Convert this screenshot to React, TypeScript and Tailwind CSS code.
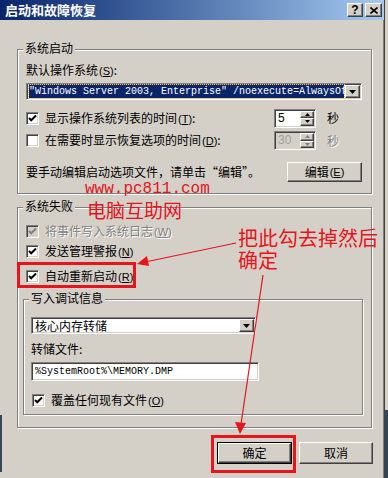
import React from "react";

const Acc = ({ k }: { k: string }) => (
  <span className="ml-[1px] font-['Liberation_Sans',sans-serif] text-[11px]">
    (<u>{k}</u>)
  </span>
);

const Check = ({
  checked,
  disabled,
  children,
}: {
  checked?: boolean;
  disabled?: boolean;
  children: React.ReactNode;
}) => {
  return (
    <div className="flex items-center h-[16px]">
      <div
        className={`w-[13px] h-[13px] border border-t-[#808080] border-l-[#808080] border-b-white border-r-white shadow-[inset_1px_1px_0_#404040,inset_-1px_-1px_0_#d4d0c8] flex items-center justify-center ${
          disabled ? "bg-[#d4d0c8]" : "bg-white"
        }`}
      >
        {checked && (
          <svg width="9" height="9" viewBox="0 0 9 9">
            <path
              d="M1 4 L3.2 6.3 L8 1.5"
              fill="none"
              stroke={disabled ? "#808080" : "#000"}
              strokeWidth="2"
            />
          </svg>
        )}
      </div>
      <span
        className={`ml-[6px] text-[12px] leading-[14px] whitespace-nowrap ${
          disabled ? "text-[#808080] [text-shadow:1px_1px_0_#fff]" : "text-black"
        }`}
      >
        {children}
      </span>
    </div>
  );
};

const Raised = ({ className, children }: { className?: string; children?: React.ReactNode }) => (
  <div
    className={`bg-[#d4d0c8] border border-t-white border-l-white border-r-[#404040] border-b-[#404040] shadow-[inset_-1px_-1px_0_#808080] flex items-center justify-center ${className}`}
  >
    {children}
  </div>
);

const Sunken = ({ className, children }: { className?: string; children?: React.ReactNode }) => (
  <div
    className={`border border-t-[#808080] border-l-[#808080] border-b-white border-r-white shadow-[inset_1px_1px_0_#404040,inset_-1px_-1px_0_#d4d0c8] ${className}`}
  >
    {children}
  </div>
);

const DownArrow = () => (
  <svg width="7" height="4" viewBox="0 0 7 4">
    <path d="M0 0 H7 L3.5 4 Z" fill="#000" />
  </svg>
);

const Spin = ({ value, disabled }: { value: string; disabled?: boolean }) => (
  <Sunken className={`flex w-[42px] h-[19px] p-[1px] ${disabled ? "bg-[#d4d0c8]" : "bg-white"}`}>
    <div
      className={`flex-1 pl-[2px] text-[12px] leading-[15px] font-['Liberation_Sans',sans-serif] ${
        disabled ? "text-[#a0a0a0]" : "text-black"
      }`}
    >
      {value}
    </div>
    <div className="flex flex-col w-[14px]">
      <Raised className="h-[8px]">
        <svg width="5" height="3" viewBox="0 0 5 3">
          <path d="M0 3 H5 L2.5 0 Z" fill={disabled ? "#808080" : "#000"} />
        </svg>
      </Raised>
      <Raised className="h-[8px]">
        <svg width="5" height="3" viewBox="0 0 5 3">
          <path d="M0 0 H5 L2.5 3 Z" fill={disabled ? "#808080" : "#000"} />
        </svg>
      </Raised>
    </div>
  </Sunken>
);

export default function App() {
  return (
    <div className="relative w-[388px] h-[478px] overflow-hidden bg-[#d4d0c8] font-['Noto_Sans_CJK_SC',sans-serif] text-black">
      <div className="w-[385px] h-[478px] border-r border-r-[#404040] shadow-[inset_-1px_0_0_#808080]">
        {/* title bar */}
        <div className="h-[20px] flex items-center bg-gradient-to-r from-[#0a246a] to-[#a6caf0] pl-[5px] pr-[2px]">
          <span className="flex-1 text-white font-bold text-[13px] leading-[16px]">启动和故障恢复</span>
          <Raised className="w-[16px] h-[14px] text-[12px] font-bold leading-none font-['Liberation_Sans',sans-serif]">
            ?
          </Raised>
          <Raised className="w-[17px] h-[14px] ml-[2px]">
            <svg width="8" height="7" viewBox="0 0 8 7">
              <path d="M0.5 0.5 L7.5 6.5 M7.5 0.5 L0.5 6.5" stroke="#000" strokeWidth="1.6" />
            </svg>
          </Raised>
        </div>

        <div className="pl-[17px] pr-[12px]">
          {/* 系统启动 */}
          <div className="relative mt-[29px] border border-[#808080] shadow-[1px_1px_0_#fff,inset_1px_1px_0_#fff] pl-[8px] pr-[9px] pb-[11px]">
            <div className="absolute -top-[9px] left-[5px] px-[2px] bg-[#d4d0c8] text-[12px] leading-[14px]">
              系统启动
            </div>
            <div className="mt-[13px] h-[14px] text-[12px] leading-[14px]">
              默认操作系统<Acc k="S" />:
            </div>
            <Sunken className="mt-[6px] h-[17px] bg-white flex items-center p-[1px]">
              <div className="flex-1 h-[13px] ml-[1px] bg-[#0a246a] outline outline-1 outline-dotted outline-[#f0c060] overflow-hidden whitespace-nowrap text-white text-[10px] leading-[13px] font-['Liberation_Mono',monospace]">
                "Windows Server 2003, Enterprise" /noexecute=AlwaysOff
              </div>
              <Raised className="w-[15px] h-[13px] ml-[1px]">
                <DownArrow />
              </Raised>
            </Sunken>
            <div className="mt-[9px] h-[18px] flex items-center">
              <div className="w-[248px]">
                <Check checked>
                  显示操作系统列表的时间<Acc k="T" />:
                </Check>
              </div>
              <Spin value="5" />
              <span className="ml-[11px] text-[12px] leading-[14px]">秒</span>
            </div>
            <div className="mt-[4px] h-[19px] flex items-center">
              <div className="w-[248px]">
                <Check>
                  在需要时显示恢复选项的时间<Acc k="D" />:
                </Check>
              </div>
              <Spin value="30" disabled />
              <span className="ml-[11px] text-[12px] leading-[14px] text-[#808080] [text-shadow:1px_1px_0_#fff]">
                秒
              </span>
            </div>
            <div className="mt-[12px] h-[20px] flex items-center justify-between">
              <span className="text-[12px] leading-[14px]">要手动编辑启动选项文件，请单击“编辑”。</span>
              <Raised className="w-[75px] h-[20px] text-[12px] leading-[14px]">
                编辑<Acc k="E" />
              </Raised>
            </div>
          </div>

          {/* 系统失败 */}
          <div className="relative mt-[13px] border border-[#808080] shadow-[1px_1px_0_#fff,inset_1px_1px_0_#fff] pl-[5px] pr-[8px] pb-[12px]">
            <div className="absolute -top-[9px] left-[5px] px-[2px] bg-[#d4d0c8] text-[12px] leading-[14px]">
              系统失败
            </div>
            <div className="pl-[3px] mt-[15px]">
              <Check checked disabled>
                将事件写入系统日志<Acc k="W" />
              </Check>
            </div>
            <div className="pl-[3px] mt-[4px]">
              <Check checked>
                发送管理警报<Acc k="N" />
              </Check>
            </div>
            <div className="pl-[3px] mt-[9px]">
              <Check checked>
                自动重新启动<Acc k="R" />
              </Check>
            </div>

            {/* 写入调试信息 */}
            <div className="relative mt-[15px] border border-[#808080] shadow-[1px_1px_0_#fff,inset_1px_1px_0_#fff] pl-[7px] pb-[6px]">
              <div className="absolute -top-[9px] left-[5px] px-[2px] bg-[#d4d0c8] text-[12px] leading-[14px]">
                写入调试信息
              </div>
              <Sunken className="mt-[17px] w-[225px] h-[17px] bg-white flex items-center p-[1px]">
                <div className="flex-1 pl-[2px] text-[12px] leading-[13px]">核心内存转储</div>
                <Raised className="w-[15px] h-[13px]">
                  <DownArrow />
                </Raised>
              </Sunken>
              <div className="mt-[8px] h-[14px] text-[12px] leading-[14px]">转储文件:</div>
              <Sunken className="mt-[6px] w-[228px] h-[19px] bg-white pl-[3px] text-[10px] leading-[17px] font-['Liberation_Mono',monospace]">
                %SystemRoot%\MEMORY.DMP
              </Sunken>
              <div className="mt-[11px] pl-[1px]">
                <Check checked>
                  覆盖任何现有文件<Acc k="O" />
                </Check>
              </div>
            </div>
          </div>

          {/* buttons */}
          <div className="mt-[14px] -mr-[1px] flex justify-end gap-[7px]">
            <div className="border border-black">
              <Raised className="w-[73px] h-[20px] text-[12px] leading-[14px]">确定</Raised>
            </div>
            <Raised className="w-[74px] h-[22px] text-[12px] leading-[14px]">取消</Raised>
          </div>
        </div>
      </div>

      {/* desktop edges */}
      <div className="absolute right-0 top-[410px] w-[3px] h-[68px] bg-[#34475a]" />
      <div className="absolute left-0 top-[415px] w-[2px] h-[57px] bg-[#34475a]" />

      {/* annotations */}
      <div className="absolute left-[85px] top-[181px] text-[16px] leading-[16px] text-[#e3141c] font-['Liberation_Mono',monospace]">
        www.pc811.com
      </div>
      <div className="absolute left-[87px] top-[199px] text-[19px] leading-[22px] text-[#e3141c]">电脑互助网</div>
      <div className="absolute left-[238px] top-[227px] text-[20px] leading-[22px] text-[#e8141b]">
        把此勾去掉然后
        <br />
        确定
      </div>
      <div className="absolute left-[17px] top-[262px] w-[119px] h-[26px] border-[3px] border-[#e8141b]" />
      <div className="absolute left-[211px] top-[435px] w-[85px] h-[38px] border-[3px] border-[#e8141b]" />
      <svg className="absolute left-0 top-0 pointer-events-none" width="388" height="478" viewBox="0 0 388 478">
        <line x1="236" y1="243" x2="145" y2="262" stroke="#e8141b" strokeWidth="1.2" />
        <path d="M137 264 L147 256 L149 266 Z" fill="#e8141b" />
        <line x1="263" y1="275" x2="241" y2="424" stroke="#e8141b" strokeWidth="1.2" />
        <path d="M240 434 L235 422 L246 423 Z" fill="#e8141b" />
      </svg>
    </div>
  );
}
